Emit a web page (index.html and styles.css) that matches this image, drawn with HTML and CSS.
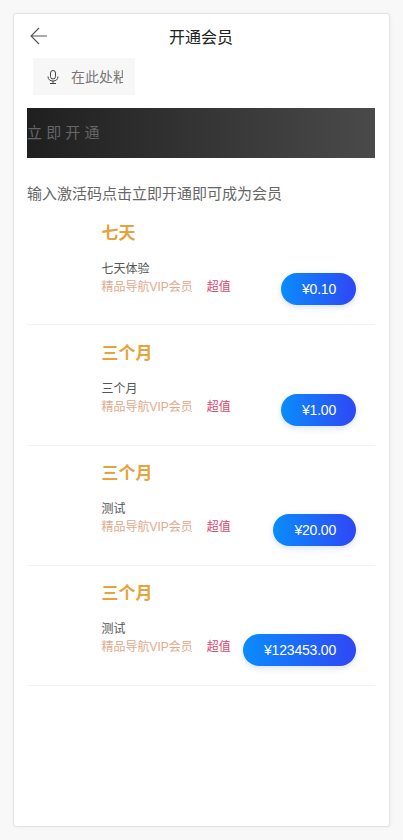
FILE: index.html
```html
<!DOCTYPE html>
<html lang="zh-CN">
<head>
<meta charset="UTF-8" />
<meta name="viewport" content="width=device-width, initial-scale=1.0" />
<title>开通会员</title>
<link rel="stylesheet" href="styles.css">
</head>
<body>
<div class="page">
  <!-- Header -->
  <div class="header">
    <svg class="back" width="18" height="18" viewBox="0 0 18 18" fill="none" stroke="#555" stroke-width="1.1">
      <path d="M1 9H17M9 1L1 9l8 8" />
    </svg>
    <h1 class="header-title">开通会员</h1>
  </div>

  <!-- Activation code -->
  <div class="code-box">
    <svg class="mic" width="12" height="14" viewBox="0 0 12 14" fill="none" stroke="#444" stroke-width="1">
      <rect x="3.5" y="0.5" width="5" height="8.5" rx="2.5" />
      <path d="M1 6.5c0 3 2 4.5 5 4.5s5-1.500 5-4.500M6 11v2.500M3 13.500h6" />
    </svg>
    <input class="code-input" type="text" placeholder="在此处粘贴激活码" />
  </div>

  <div class="open-btn">立 即 开 通</div>
  <p class="tip">输入激活码点击立即开通即可成为会员</p>

  <!-- Plans -->
  <div class="plan">
    <div class="plan-info">
      <h2 class="plan-title">七天</h2>
      <p class="plan-name">七天体验</p>
      <p class="plan-desc">精品导航VIP会员<span class="plan-tag">超值</span></p>
    </div>
    <button class="price">¥0.10</button>
  </div>
  <div class="plan">
    <div class="plan-info">
      <h2 class="plan-title">三个月</h2>
      <p class="plan-name">三个月</p>
      <p class="plan-desc">精品导航VIP会员<span class="plan-tag">超值</span></p>
    </div>
    <button class="price">¥1.00</button>
  </div>
  <div class="plan">
    <div class="plan-info">
      <h2 class="plan-title">三个月</h2>
      <p class="plan-name">测试</p>
      <p class="plan-desc">精品导航VIP会员<span class="plan-tag">超值</span></p>
    </div>
    <button class="price">¥20.00</button>
  </div>
  <div class="plan">
    <div class="plan-info">
      <h2 class="plan-title">三个月</h2>
      <p class="plan-name">测试</p>
      <p class="plan-desc">精品导航VIP会员<span class="plan-tag">超值</span></p>
    </div>
    <button class="price">¥123453.00</button>
  </div>
</div>
</body>
</html>
```

FILE: styles.css
```css
* {
  box-sizing: border-box;
  margin: 0;
  padding: 0;
}
body {
  background: #f8f8f8;
  height: 840px;
  padding: 14px;
  overflow: hidden;
  font-family: "Liberation Sans", "Noto Sans CJK SC", sans-serif;
}
.page {
  background: #fff;
  width: 375px;
  height: 812px;
  padding: 0 14px 0 13px;
  border-radius: 2px;
  box-shadow: 0 0 1px 1px #e2e2e2, 2px 2px 4px rgba(0,0,0,0.03);
}
.header {
  height: 44px;
  display: flex;
  align-items: center;
  justify-content: center;
  position: relative;
}
.back {
  position: absolute;
  left: 3px;
  top: 13px;
}
.header-title {
  font-size: 16px;
  font-weight: normal;
  color: #222;
}
.code-box {
  width: 102px;
  height: 37px;
  margin-left: 6px;
  background: #f7f7f7;
  display: flex;
  align-items: center;
  padding-left: 14px;
  overflow: hidden;
}
.mic {
  flex: none;
}
.code-input {
  width: 52px;
  margin-left: 12px;
  border: none;
  outline: none;
  background: none;
  font-family: inherit;
  font-size: 14px;
}
.code-input::placeholder {
  color: #777;
}
.open-btn {
  height: 50px;
  margin-top: 13px;
  background: linear-gradient(to right, #1f1f1f, #4a4a4a);
  color: #666;
  font-size: 15px;
  line-height: 50px;
  white-space: pre;
}
.tip {
  margin-top: 25px;
  font-size: 15px;
  line-height: 22px;
  color: #666;
}
.plan {
  height: 120.3px;
  display: flex;
  align-items: flex-start;
  padding: 0 19px 0 74.5px;
  border-bottom: 1px solid #f2f2f2;
}
.plan-info {
  padding-top: 15.6px;
}
.plan-title {
  font-size: 17px;
  line-height: 26px;
  font-weight: bold;
  color: #e6a23c;
}
.plan-name {
  margin-top: 13px;
  font-size: 12px;
  line-height: 18px;
  color: #555;
}
.plan-desc {
  font-size: 12px;
  line-height: 18px;
  color: #e4a98c;
  white-space: nowrap;
}
.plan-tag {
  margin-left: 14px;
  color: #d8486a;
}
.price {
  margin-left: auto;
  margin-top: 68.3px;
  height: 32px;
  padding: 0 20px 0 21px;
  border: none;
  border-radius: 16px;
  background: linear-gradient(to right, #0a8cfc, #2f47f5);
  box-shadow: 0 2px 6px rgba(60,100,240,0.2);
  color: #fff;
  font-family: inherit;
  font-size: 14px;
  letter-spacing: -0.2px;
  white-space: nowrap;
}
```
